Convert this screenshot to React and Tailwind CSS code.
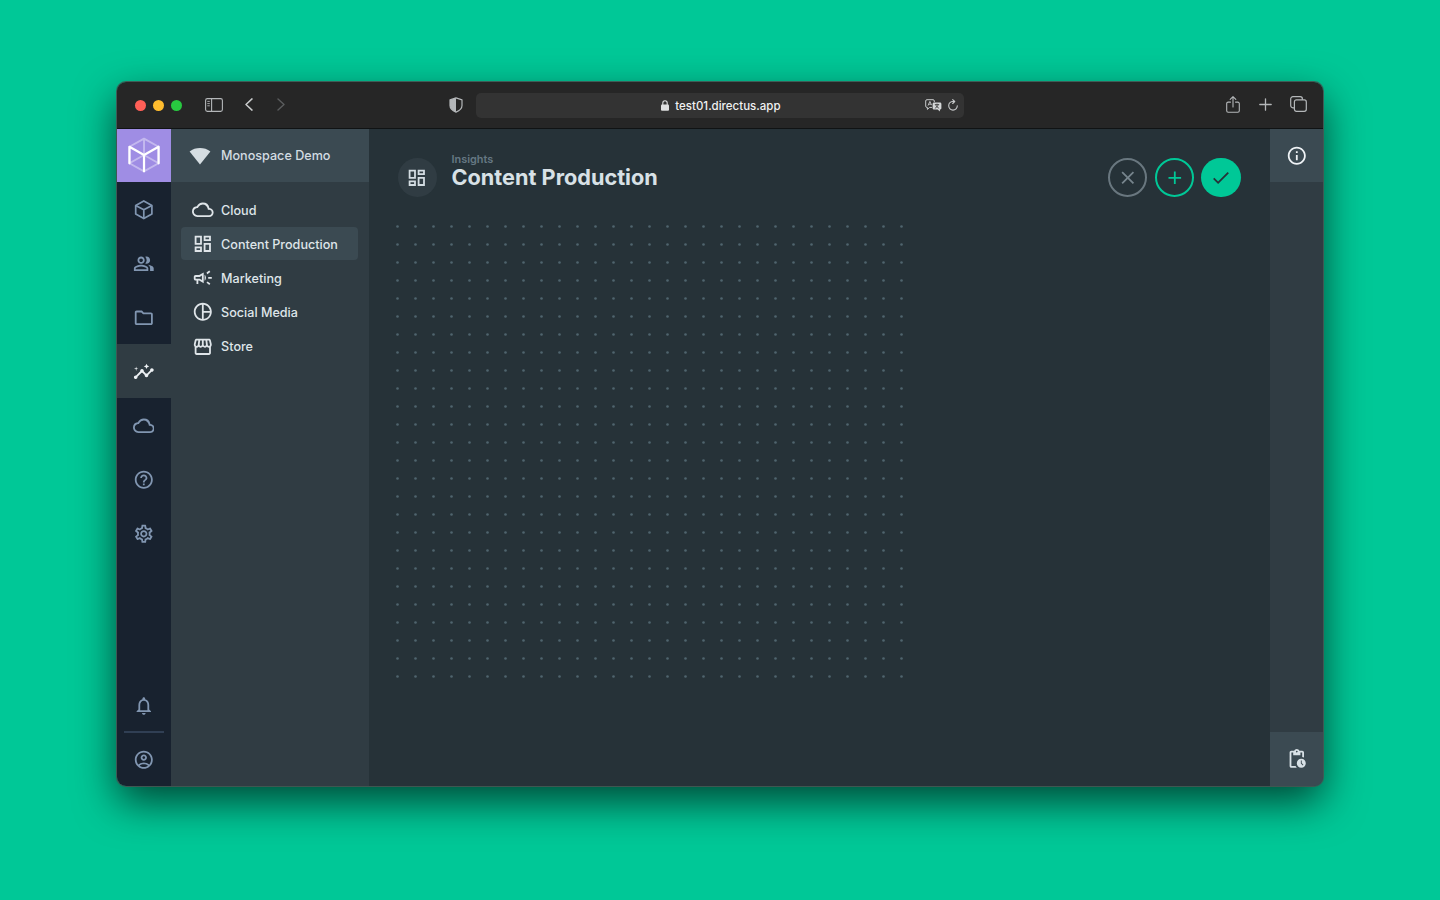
import React from "react";
import {
  MdOutlineDashboard,
  MdOutlineCampaign,
  MdOutlineCloud,
  MdOutlineStorefront,
  MdOutlinePeopleAlt,
  MdOutlineFolder,
  MdOutlineInsights,
  MdHelpOutline,
  MdOutlineSettings,
  MdOutlineNotifications,
  MdOutlineAccountCircle,
  MdOutlineInfo,
  MdOutlinePendingActions,
  MdOutlinePieChart,
  MdClose,
  MdAdd,
  MdCheck,
} from "react-icons/md";

function BoxIcon({ className }) {
  return (
    <svg viewBox="0 0 24 24" className={className} fill="none" stroke="currentColor" strokeWidth="1.9" strokeLinejoin="round">
      <path d="M12 2.2 21 7.2V16.8L12 21.8 3 16.8V7.2Z" />
      <path d="M3 7.2 12 12 21 7.2M12 12V21.8" />
    </svg>
  );
}

function ProjectLogo() {
  return (
    <svg viewBox="0 0 34 38" className="h-[37px] w-[33px]" fill="none" strokeLinejoin="round" strokeLinecap="round">
      <path d="M16.5 1.7 31.5 10V27L16.5 35.3 1.5 27V10ZM16.5 1.7V18.5M1.5 27 16.5 18.5 31.5 27" stroke="#fff" strokeOpacity=".38" strokeWidth="2" />
      <path d="M1.5 27V10L16.5 18.5 31.5 10V27M16.5 18.5V35.3" stroke="#fff" strokeWidth="2.3" />
    </svg>
  );
}

const modules = [
  { name: "content", Icon: BoxIcon },
  { name: "users", Icon: MdOutlinePeopleAlt },
  { name: "files", Icon: MdOutlineFolder },
  { name: "insights", Icon: MdOutlineInsights, active: true },
  { name: "cloud", Icon: MdOutlineCloud },
  { name: "docs", Icon: MdHelpOutline },
  { name: "settings", Icon: MdOutlineSettings },
];

const dashboards = [
  { label: "Cloud", Icon: MdOutlineCloud },
  { label: "Content Production", Icon: MdOutlineDashboard, active: true },
  { label: "Marketing", Icon: MdOutlineCampaign },
  { label: "Social Media", Icon: MdOutlinePieChart },
  { label: "Store", Icon: MdOutlineStorefront },
];

function BrowserBar() {
  return (
    <div className="grid h-[47px] shrink-0 grid-cols-[337.4px_488px_1fr] items-center border-b border-[#101314] bg-[#262626] pl-[22px] text-[#b4b7b9]">
      <div className="flex items-center">
        <div className="-ml-[4px] flex gap-[7px]">
          <span className="size-[11px] rounded-full bg-[#ff5f57]" />
          <span className="size-[11px] rounded-full bg-[#febc2e]" />
          <span className="size-[11px] rounded-full bg-[#28c840]" />
        </div>
        <svg viewBox="0 0 18 14" className="mb-[1px] ml-[23.3px] h-[14px] w-[18px]" fill="none" stroke="currentColor">
          <rect x=".6" y=".6" width="16.8" height="12.8" rx="1.8" strokeWidth="1.1" />
          <path d="M6.6 .6V13.4" strokeWidth="1.1" />
          <path d="M2.3 3.4H4.8M2.3 5.6H4.8M2.3 7.8H4.8" strokeWidth=".9" />
        </svg>
        <svg viewBox="0 0 8 13" className="mb-[1px] ml-[22px] h-[13px] w-[8px]" fill="none" stroke="#c8cacb" strokeWidth="1.5" strokeLinecap="round" strokeLinejoin="round">
          <path d="M7 .9 1 6.5 7 12.1" />
        </svg>
        <svg viewBox="0 0 8 13" className="mb-[1px] ml-[24px] h-[13px] w-[8px]" fill="none" stroke="#5a5c5d" strokeWidth="1.4" strokeLinecap="round" strokeLinejoin="round">
          <path d="M1 .9 7 6.5 1 12.1" />
        </svg>
        <svg viewBox="0 0 14 16" className="ml-[164px] h-[16px] w-[14px]">
          <path d="M7 .9 13 2.9V8.6C13 11.6 10.4 13.8 7 15.1 3.6 13.8 1 11.6 1 8.6V2.9Z" fill="none" stroke="currentColor" strokeWidth="1.2" strokeLinejoin="round" />
          <path d="M7 .9V15.1C3.6 13.8 1 11.6 1 8.6V2.9Z" fill="currentColor" />
        </svg>
      </div>
      <div className="grid h-[25px] grid-cols-[1fr_auto_1fr] items-center rounded-[5px] bg-[#333333]">
        <span />
        <div className="flex items-center gap-[5px] pl-[2px] text-[11.5px] font-medium text-[#f0f1f1]">
          <svg viewBox="0 0 8 11" className="h-[11px] w-[8px]">
            <rect x="0" y="4.4" width="8" height="6.4" rx="1" fill="#dedfe0" />
            <path d="M1.8 5V3A2.2 2.2 0 0 1 6.2 3V5" fill="none" stroke="#dedfe0" strokeWidth="1.1" />
          </svg>
          <span className="pt-[2.5px] pl-[1px]">test01.directus.app</span>
        </div>
        <div className="flex items-center justify-end gap-[6px] pr-[6px]">
          <svg viewBox="0 0 17 13" className="h-[13px] w-[17px]" fill="none" stroke="#c8cacb" strokeWidth="1" strokeLinejoin="round">
            <path d="M7 8.4H4.6L2.4 10.4V8.4H2A1.3 1.3 0 0 1 .7 7.1V2A1.3 1.3 0 0 1 2 .7H8A1.3 1.3 0 0 1 9.3 2V3" />
            <path d="M3 6.6 4.9 2.4 6.6 6.2M3.7 5.2H6.2" strokeWidth=".9" />
            <path d="M9 3.5H15A1.4 1.4 0 0 1 16.4 4.9V9.2A1.4 1.4 0 0 1 15 10.6H14.9V12.4L12.6 10.6H9A1.4 1.4 0 0 1 7.6 9.2V4.9A1.4 1.4 0 0 1 9 3.5Z" fill="#d4d6d7" stroke="none" />
            <path d="M9.8 5.6H14.2M12 4.6V5.6M13.2 5.6C12.6 7.6 11.4 8.6 9.9 9.2M10.8 5.8C11.4 7.6 12.6 8.7 14.1 9.2" stroke="#333" strokeWidth=".8" />
          </svg>
          <svg viewBox="0 0 10 12" className="h-[12px] w-[10px]" fill="none" stroke="#c8cacb" strokeWidth="1.1" strokeLinecap="round" strokeLinejoin="round">
            <path d="M9.3 6.8A4.3 4.3 0 1 1 5 2.5H6.4" />
            <path d="M4.7 .6 6.7 2.5 4.7 4.5" />
          </svg>
        </div>
      </div>
      <div className="flex items-center justify-end pr-[16px] pb-[1.5px]">
        <svg viewBox="0 0 14 17" className="h-[17px] w-[14px]" fill="none" stroke="currentColor" strokeWidth="1.1" strokeLinecap="round" strokeLinejoin="round">
          <path d="M4.5 6.1H2.2A1.5 1.5 0 0 0 .7 7.6V14.8A1.5 1.5 0 0 0 2.2 16.3H11.8A1.5 1.5 0 0 0 13.3 14.8V7.6A1.5 1.5 0 0 0 11.8 6.1H9.5" />
          <path d="M7 11V.8M4.2 3.4 7 .7 9.8 3.4" />
        </svg>
        <svg viewBox="0 0 13 13" className="ml-[18.5px] size-[13px]" fill="none" stroke="currentColor" strokeWidth="1.3" strokeLinecap="round">
          <path d="M6.5 .8V12.2M.8 6.5H12.2" />
        </svg>
        <svg viewBox="0 0 17 16" className="ml-[18.5px] h-[16px] w-[17px]" fill="none" stroke="currentColor" strokeWidth="1.2" strokeLinejoin="round">
          <rect x="4.4" y="3.9" width="11.9" height="11.4" rx="2" />
          <path d="M4.2 11.8H2.9A2.2 2.2 0 0 1 .7 9.6V2.9A2.2 2.2 0 0 1 2.9 .7H10.2A2.2 2.2 0 0 1 12.4 2.9V3.7" />
        </svg>
      </div>
    </div>
  );
}

function ModuleBar() {
  return (
    <nav className="flex w-[54px] shrink-0 flex-col bg-[#18222f] text-[#8196b1]">
      <div className="flex h-[53.3px] shrink-0 items-center justify-center bg-[#9f8de4] pb-[1px] pl-[1px]">
        <ProjectLogo />
      </div>
      {modules.map(({ name, Icon, active }) => (
        <div
          key={name}
          className={active ? "flex h-[54px] items-center justify-center bg-[#303c43] text-[#eef2f5]" : "flex h-[54px] items-center justify-center"}
        >
          <Icon className="size-[21.6px]" />
        </div>
      ))}
      <div className="mt-auto flex h-[52px] items-center justify-center pt-[1px]">
        <MdOutlineNotifications className="size-[21.6px]" />
      </div>
      <div className="mx-[7px] h-[2px] shrink-0 bg-[#303f54]" />
      <div className="flex h-[52.5px] items-center justify-center pt-[1px]">
        <MdOutlineAccountCircle className="size-[21.6px]" />
      </div>
    </nav>
  );
}

function Navigation() {
  return (
    <aside className="flex w-[198px] shrink-0 flex-col bg-[#303c43] text-[#dfe5e9]">
      <div className="flex h-[53.3px] items-center bg-[#3b4a52] pl-[18px]">
        <svg viewBox="0 0 22 18" className="h-[18px] w-[22px]" fill="#d5dde2">
          <path d="M.6 4.4C6.4-.2 15.6-.2 21.4 4.4L11 17.4Z" />
        </svg>
        <span className="ml-[10.5px] pt-[1.5px] text-[12.6px] font-medium text-[#d3dce2]">Monospace Demo</span>
      </div>
      <ul className="flex flex-col gap-[1.2px] px-[10.5px] pt-[10.5px]">
        {dashboards.map(({ label, Icon, active }) => (
          <li
            key={label}
            className={active ? "flex h-[33px] items-center rounded-[4px] bg-[#3b4a52] pl-[11.3px]" : "flex h-[33px] items-center pl-[11.3px]"}
          >
            <Icon className="mt-[0.5px] size-[21.6px]" />
            <span className="ml-[7.2px] pt-[3.6px] text-[12.6px] font-medium">{label}</span>
          </li>
        ))}
      </ul>
    </aside>
  );
}

function DotGrid() {
  return (
    <svg className="mt-[19.5px] ml-[19.5px] h-[468px] w-[522px] shrink-0">
      <defs>
        <pattern id="grid-dots" width="18" height="18" patternUnits="userSpaceOnUse">
          <circle cx="9.5" cy="9.5" r="1.3" fill="#4f646e" />
        </pattern>
      </defs>
      <rect width="522" height="468" fill="url(#grid-dots)" />
    </svg>
  );
}

export default function App() {
  return (
    <div className="flex h-[900px] w-[1440px] items-start overflow-hidden bg-[#00c897] pt-[82px] pl-[116.5px] font-['Inter',sans-serif]">
      <div className="flex h-[703.5px] w-[1206.8px] flex-col overflow-hidden rounded-[9px] shadow-[0_0_0_1px_rgba(70,84,82,0.9),0_16px_42px_rgba(0,0,0,0.65)]">
        <BrowserBar />
        <div className="flex min-h-0 flex-1">
          <ModuleBar />
          <Navigation />
          <main className="flex min-w-0 flex-1 flex-col bg-[#263238]">
            <header className="flex h-[68.5px] items-center pt-[28.5px] pr-[28.7px] pl-[29px]">
              <div className="flex size-[39.5px] items-center justify-center rounded-full bg-[#303c43] text-[#d3dce2]">
                <MdOutlineDashboard className="size-[21.6px]" />
              </div>
              <div className="ml-[14.5px] flex -translate-y-[8px] flex-col">
                <span className="text-[10.9px] leading-[14px] font-semibold text-[#657883]">Insights</span>
                <h1 className="text-[21.7px] leading-[22px] font-bold text-[#d8e1e6]">Content Production</h1>
              </div>
              <div className="ml-auto flex gap-[7.3px]">
                <button className="flex size-[39.6px] items-center justify-center rounded-full border-2 border-[#69777f] text-[#76848c]">
                  <MdClose className="size-[21.6px]" />
                </button>
                <button className="flex size-[39.6px] items-center justify-center rounded-full border-2 border-[#00c897] text-[#00c897]">
                  <MdAdd className="size-[21.6px]" />
                </button>
                <button className="flex size-[39.6px] items-center justify-center rounded-full bg-[#00c897] text-[#263238]">
                  <MdCheck className="size-[21.6px]" />
                </button>
              </div>
            </header>
            <DotGrid />
          </main>
          <aside className="flex w-[53.6px] shrink-0 flex-col justify-between bg-[#303c43]">
            <div className="flex h-[53.3px] items-center justify-center bg-[#3b4a52] text-[#eef2f5]">
              <MdOutlineInfo className="size-[21.6px]" />
            </div>
            <div className="flex h-[53.5px] items-center justify-center bg-[#3b4a52] text-[#d8e1e6]">
              <MdOutlinePendingActions className="size-[21.6px]" />
            </div>
          </aside>
        </div>
      </div>
    </div>
  );
}
